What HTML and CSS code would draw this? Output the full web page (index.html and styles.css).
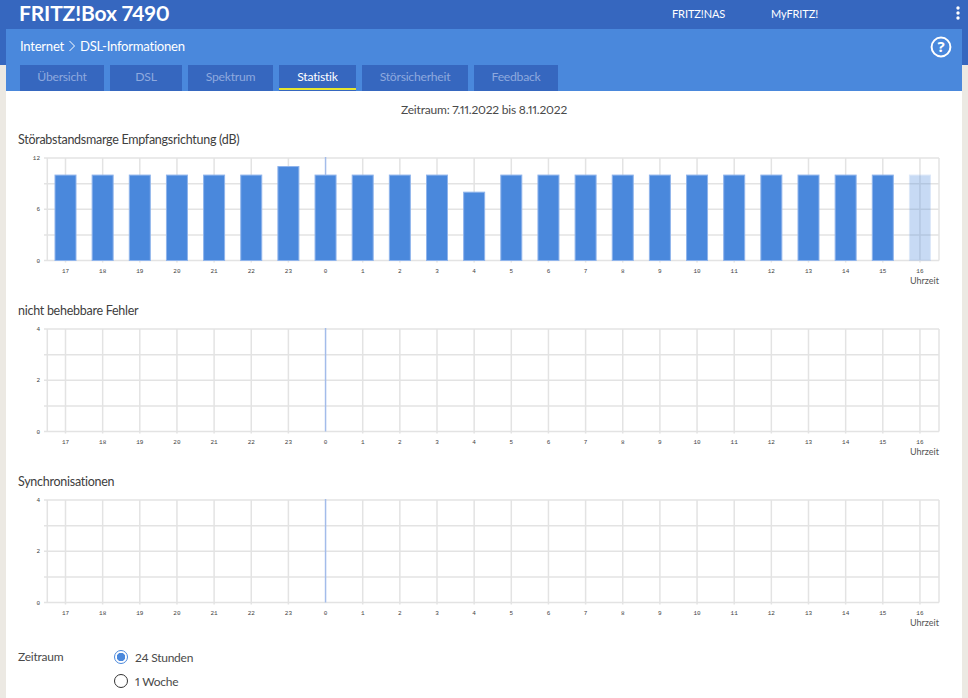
FILE: index.html
```html
<!DOCTYPE html>
<html lang="de">
<head>
<meta charset="utf-8">
<title>FRITZ!Box 7490</title>
<link rel="stylesheet" href="styles.css">
</head>
<body>
<header class="topbar">
  <div class="brand">FRITZ!Box 7490</div>
  <nav class="topnav">
    <a class="topnav-nas">FRITZ!NAS</a>
    <a class="topnav-my">MyFRITZ!</a>
  </nav>
  <svg class="kebab" width="6" height="14" viewBox="0 0 6 14"><circle cx="3" cy="2" r="1.7"/><circle cx="3" cy="7" r="1.7"/><circle cx="3" cy="12" r="1.7"/></svg>
</header>
<div class="page">
  <div class="titlebar">
    <div class="crumbs">
      <span>Internet</span>
      <svg class="crumb-sep" width="8" height="12" viewBox="0 0 8 12"><path d="M1.5 1 L6.5 6 L1.5 11"/></svg>
      <span>DSL-Informationen</span>
    </div>
    <svg class="help" width="22" height="22" viewBox="0 0 22 22"><circle cx="11" cy="11" r="9.4"/><text x="11" y="16" text-anchor="middle">?</text></svg>
  </div>
  <div class="tabs">
    <a class="tab tab-a">Übersicht</a>
    <a class="tab tab-b">DSL</a>
    <a class="tab tab-c">Spektrum</a>
    <a class="tab tab-d active">Statistik</a>
    <a class="tab tab-e">Störsicherheit</a>
    <a class="tab tab-f">Feedback</a>
  </div>
  <main class="content">
    <p class="period">Zeitraum: 7.11.2022 bis 8.11.2022</p>
    <section class="chart-block">
      <h3>Störabstandsmarge Empfangsrichtung (dB)</h3>
      <svg class="chart" data-max="12" data-values="10,10,10,10,10,10,11,10,10,10,10,8,10,10,10,10,10,10,10,10,10,10,10,10" width="956" height="142"></svg>
    </section>
    <section class="chart-block">
      <h3>nicht behebbare Fehler</h3>
      <svg class="chart" data-max="4" width="956" height="142"></svg>
    </section>
    <section class="chart-block">
      <h3>Synchronisationen</h3>
      <svg class="chart" data-max="4" width="956" height="142"></svg>
    </section>
    <form class="range">
      <div class="range-label">Zeitraum</div>
      <div class="range-options">
        <label class="radio"><span class="dot on"></span>24 Stunden</label>
        <label class="radio"><span class="dot"></span>1 Woche</label>
      </div>
    </form>
  </main>
</div>
<script src="chart.js"></script>
</body>
</html>
```

FILE: styles.css
```css
* { box-sizing: border-box; }
html, body { margin: 0; height: 698px; overflow: hidden; }
body {
  background: linear-gradient(#3667bf 65px, #ece9e3 65px);
  font-family: "Lato", "Noto Sans", sans-serif;
  font-variant-numeric: proportional-nums;
  color: #4a4a4a;
  font-size: 12.5px;
}
.topbar {
  height: 29px;
  background: #3667bf;
  display: flex;
  align-items: center;
  padding: 0 0 3px 19px;
  color: #fff;
}
.brand { font-size: 21px; font-weight: 700; line-height: 26px; width: 653px; letter-spacing: -0.15px; }
.topnav { display: flex; font-size: 11px; letter-spacing: -0.1px; }
.topnav-nas { width: 99px; }
.topnav-my { width: 184px; }
.kebab { fill: #fff; }
.page { margin: 0 6px; width: 956px; background: #fff; height: 669px; }
.titlebar {
  height: 36px;
  background: #4a88dc;
  display: flex;
  align-items: center;
  justify-content: space-between;
  padding: 0 10px 0 14px;
  color: #fff;
}
.crumbs { display: flex; align-items: center; gap: 4px; font-size: 13.1px; letter-spacing: -0.25px; padding-bottom: 2px; }
.crumb-sep { fill: none; stroke: #fff; stroke-width: 1; }
.help { fill: none; stroke: #fff; stroke-width: 2; }
.help text { fill: #fff; stroke: none; font-size: 15px; font-weight: 700; font-family: "Noto Sans", sans-serif; }
.tabs {
  height: 26px;
  background: #4a88dc;
  display: flex;
  gap: 6px;
  padding-left: 14px;
}
.tab {
  background: #3667bf;
  color: #8ea9de;
  font-size: 12.2px;
  letter-spacing: -0.25px;
  display: flex;
  align-items: center;
  justify-content: center;
  height: 26px;
  padding-bottom: 3px;
}
.tab-a { width: 84px; }
.tab-b { width: 72px; }
.tab-c { width: 85px; }
.tab-d { width: 77px; }
.tab-e { width: 106px; }
.tab-f { width: 84px; }
.tab.active { color: #fff; border-bottom: 2px solid #e6e62e; box-shadow: 0 1px 0 #3667bf; height: 25px; padding-bottom: 0; }
.period { margin: 0; height: 39px; padding-top: 10px; text-align: center; font-size: 12px; line-height: 17px; letter-spacing: -0.2px; }
.chart-block { height: 171px; }
.chart-block h3 { margin: 0; padding: 1px 0 0 12px; font-size: 12.5px; font-weight: 400; line-height: 18px; height: 20px; letter-spacing: -0.27px; color: #404040; }
.chart { display: block; margin-top: 6px; }
.bar { fill: #4a88dc; stroke: #8fb4ec; stroke-width: 1; }
.bar.partial { opacity: 0.3; }
.grid { stroke: #e3e3e3; stroke-width: 1.5; }
.now { stroke: #a3bcea; stroke-width: 1.5; }
.tick { font-family: "Liberation Mono", monospace; font-size: 6px; fill: #444; }
.axis-name { font-size: 9px; fill: #555; font-family: "Lato", sans-serif; }
.range { display: flex; padding-left: 12px; margin-top: 2px; font-size: 12px; letter-spacing: -0.25px; }
.range-label { width: 96px; line-height: 24px; }
.range-options { display: flex; flex-direction: column; }
.radio { display: flex; align-items: center; height: 24px; }
.dot {
  width: 14px; height: 14px; border-radius: 50%;
  border: 1.5px solid #333;
  margin-right: 7px;
  background: #fff;
}
.dot.on { border-color: #4a88dc; background: radial-gradient(circle, #4a88dc 0 4px, #fff 4.5px); }
```

FILE: chart.js
```js
var NS = "http://www.w3.org/2000/svg";
var HOURS = [17,18,19,20,21,22,23,0,1,2,3,4,5,6,7,8,9,10,11,12,13,14,15,16];
var X0 = 41.3, X1 = 933, STEP = 37.15, CX0 = 59.5, TOP = 2, BOTTOM = 104.5;

function el(svg, name, attrs, text) {
  var n = document.createElementNS(NS, name);
  for (var k in attrs) n.setAttribute(k, attrs[k]);
  if (text !== undefined) n.textContent = text;
  svg.appendChild(n);
  return n;
}

document.querySelectorAll(".chart").forEach(function (svg) {
  var max = +svg.dataset.max;
  var values = svg.dataset.values ? svg.dataset.values.split(",").map(Number) : [];
  var h = BOTTOM - TOP, i;
  for (i = 0; i < 5; i++) {
    var y = TOP + h * i / 4;
    el(svg, "line", { "class": "grid", x1: 38, x2: X1, y1: y, y2: y });
  }
  el(svg, "line", { "class": "grid", x1: X0, x2: X0, y1: TOP, y2: BOTTOM });
  el(svg, "line", { "class": "grid", x1: X1, x2: X1, y1: TOP, y2: BOTTOM });
  HOURS.forEach(function (hour, idx) {
    var x = CX0 + STEP * idx;
    if (hour !== 0) el(svg, "line", { "class": "grid", x1: x, x2: x, y1: TOP, y2: BOTTOM + 2 });
  });
  values.forEach(function (v, idx) {
    var x = CX0 + STEP * idx, bh = h * v / max;
    el(svg, "rect", { "class": idx === 23 ? "bar partial" : "bar", x: x - 10.5, y: BOTTOM - bh, width: 21, height: bh });
  });
  var nowX = CX0 + STEP * 7;
  el(svg, "line", { "class": "now", x1: nowX, x2: nowX, y1: TOP - 1, y2: values.length ? BOTTOM - h * values[7] / max : BOTTOM });
  [max, max / 2, 0].forEach(function (v, idx) {
    el(svg, "text", { "class": "tick", x: 34, y: TOP + h * idx / 2 + 2, "text-anchor": "end" }, String(v));
  });
  HOURS.forEach(function (hour, idx) {
    el(svg, "text", { "class": "tick", x: CX0 + STEP * idx, y: 117, "text-anchor": "middle" }, String(hour));
  });
  el(svg, "text", { "class": "axis-name", x: X1, y: 128, "text-anchor": "end" }, "Uhrzeit");
});
```
